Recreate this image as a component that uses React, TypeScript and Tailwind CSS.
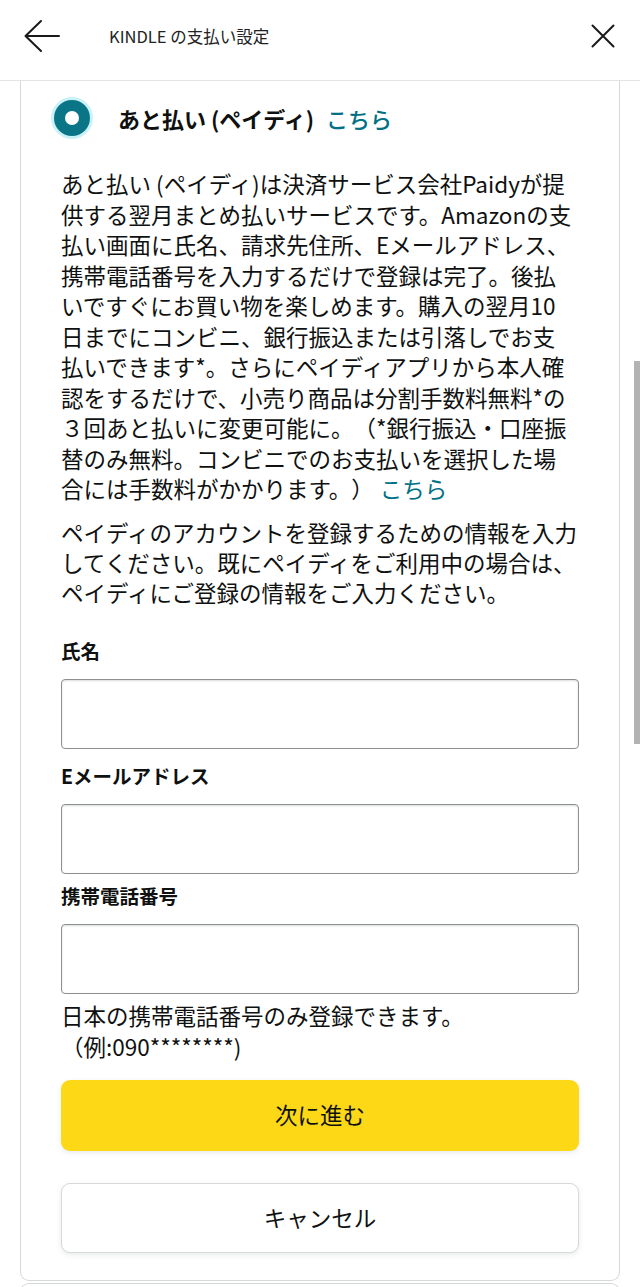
const font = { fontFamily: '"Noto Sans CJK JP", "Noto Sans", Roboto, sans-serif' };

const intro = [
  "あと払い (ペイディ)は決済サービス会社Paidyが提",
  "供する翌月まとめ払いサービスです。Amazonの支",
  "払い画面に氏名、請求先住所、Eメールアドレス、",
  "携帯電話番号を入力するだけで登録は完了。後払",
  "いですぐにお買い物を楽しめます。購入の翌月10",
  "日までにコンビニ、銀行振込または引落しでお支",
  "払いできます*。さらにペイディアプリから本人確",
  "認をするだけで、小売り商品は分割手数料無料*の",
  "３回あと払いに変更可能に。（*銀行振込・口座振",
  "替のみ無料。コンビニでのお支払いを選択した場",
];

function Field({ label, labelGap }: { label: string; labelGap: string }) {
  return (
    <div className={labelGap}>
      <div className="text-[19.5px] font-bold leading-[28px] text-[#0f1111]">{label}</div>
      <div className="mt-[14px] h-[70px] rounded-[4px] border border-[#8d9090] bg-white shadow-[inset_0_1px_2px_rgba(15,17,17,0.15)]" />
    </div>
  );
}

export default function App() {
  return (
    <div
      className="relative h-[1287px] w-[640px] overflow-hidden bg-white text-[#0f1111] [text-spacing-trim:space-all]"
      style={font}
    >
      {/* header */}
      <header className="h-[81px] border-b border-[#e4e4e4] bg-white">
        <div className="flex h-[72px] items-center pl-[24px] pr-[25px]">
          <svg width="36" height="34" viewBox="0 0 36 34" fill="none" stroke="#1a1a1a" strokeWidth="2" strokeLinecap="round" strokeLinejoin="round">
            <path d="M1.5 17H35M17 2L1.5 17L17 32" />
          </svg>
          <div className="ml-[49px] flex-1 text-[16.5px] text-[#222]">KINDLE の支払い設定</div>
          <svg width="24" height="24" viewBox="0 0 24 24" fill="none" stroke="#1a1a1a" strokeWidth="2" strokeLinecap="round">
            <path d="M1.5 1.5L22.5 22.5M22.5 1.5L1.5 22.5" />
          </svg>
        </div>
      </header>

      {/* card */}
      <div className="mx-[20px] rounded-b-[9px] border-x border-b border-[#d5d9d9] px-[40px] pb-[27px]">
        <div className="-ml-[7px] flex items-center pt-[19px]">
          <div className="flex h-[36px] w-[36px] items-center justify-center rounded-full bg-[#0b7588] shadow-[0_0_0_3px_#c9f1f8]">
            <div className="h-[14px] w-[14px] rounded-full bg-white" />
          </div>
          <div className="ml-[28px] text-[22px] leading-[36px]">
            <span className="font-bold">あと払い (ペイディ)</span>
            <span className="ml-[12px] font-medium text-[#007185]">こちら</span>
          </div>
        </div>

        <p className="mt-[32px] whitespace-nowrap text-[22.5px] leading-[30.5px]">
          {intro.map((line) => (
            <span key={line}>
              {line}
              <br />
            </span>
          ))}
          合には手数料がかかります。）<span className="ml-[6px] text-[#007185]">こちら</span>
        </p>

        <p className="mt-[13px] whitespace-nowrap text-[22.5px] leading-[30px]">
          ペイディのアカウントを登録するための情報を入力
          <br />
          してください。既にペイディをご利用中の場合は、
          <br />
          ペイディにご登録の情報をご入力ください。
        </p>

        <Field label="氏名" labelGap="mt-[30px]" />
        <Field label="Eメールアドレス" labelGap="mt-[13px]" />
        <Field label="携帯電話番号" labelGap="mt-[8px]" />

        <p className="mt-[6px] text-[22.5px] leading-[31px]">
          日本の携帯電話番号のみ登録できます。
          <br />
          （例:090********)
        </p>

        <button className="mt-[18px] flex h-[71px] w-full items-center justify-center rounded-[9px] bg-[#fcd816] text-[22.5px] text-[#0f1111] shadow-[0_2px_5px_rgba(213,217,217,0.5)]">
          次に進む
        </button>
        <button className="mt-[32px] flex h-[70px] w-full items-center justify-center rounded-[9px] border border-[#d5d9d9] bg-white text-[22.5px] text-[#0f1111] shadow-[0_2px_5px_rgba(213,217,217,0.5)]">
          キャンセル
        </button>
      </div>

      {/* next card edge */}
      <div className="mx-[20px] mt-[2px] h-[20px] rounded-t-[9px] border-x border-t border-[#d5d9d9]" />

      {/* scrollbar */}
      <div className="absolute right-0 top-[361px] h-[383px] w-[6px] bg-[#b3b3b3]" />
    </div>
  );
}
